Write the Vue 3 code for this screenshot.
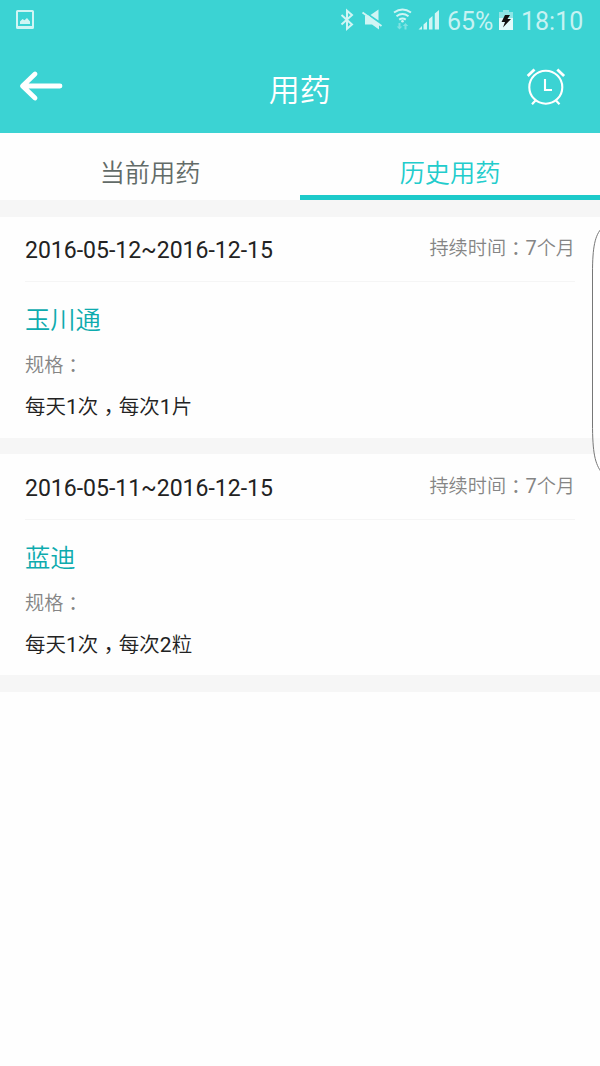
<script setup>
const tabs = [
  { label: '当前用药', active: false },
  { label: '历史用药', active: true },
]

const records = [
  { period: '2016-05-12~2016-12-15', months: 7, name: '玉川通', times: 1, amount: 1, unit: '片' },
  { period: '2016-05-11~2016-12-15', months: 7, name: '蓝迪', times: 1, amount: 2, unit: '粒' },
]
</script>

<template>
  <div class="screen">
    <header class="top">
      <div class="status">
        <svg class="picture" width="18" height="19" viewBox="0 0 18 19">
          <path fill-rule="evenodd" d="M1.500 0h15A1.500 1.500 0 0 1 18 1.500v16a1.500 1.500 0 0 1-1.500 1.500h-15A1.500 1.500 0 0 1 0 17.500v-16A1.500 1.500 0 0 1 1.500 0zM2 2v14h14V2z" />
          <path d="M4 14v-2.500l2.500-2.500 2 1.200L11 8l3 3.500V14z" />
        </svg>
        <div class="indicators">
          <svg width="160" height="40" viewBox="340 0 160 40" class="radio">
            <path d="M341.500 15l10.500 9.500-5 4.300V10.700l5 4.300-10.500 9.500" fill="none" stroke="currentColor" stroke-width="2" />
            <path d="M370.500 15L378.500 9.500V20.500zM365 15.500h3.500l10.500 9V29.500l-7-5h-7z" />
            <path d="M362.500 12.500l19 13.500" stroke="currentColor" stroke-width="2" />
            <g fill="none" stroke="currentColor" stroke-width="2">
              <path d="M394 12.500q8.500-6 17 0" />
              <path d="M396.500 16.200q6-4.500 12 0" />
              <path d="M399.200 19.600q3.300-2.400 6.600 0" />
            </g>
            <circle cx="402.500" cy="21.300" r="1.300" />
            <g opacity=".45">
              <path d="M398.500 23h2v3.500h1.800l-2.800 3-2.800-3h1.800zM404.500 29.500h2V26h1.800l-2.800-3-2.800 3h1.800z" />
            </g>
            <path d="M418.500 29.500l3.500-3.500v3.500zM423.500 24.500l3.500-3v8h-3.500zM429 19l3.500-3v13.500H429zM434.800 13.500l4.200-3.500v19.500h-4.200z" />
          </svg>
          <span class="percent">65%</span>
          <svg class="battery" width="14" height="20" viewBox="0 0 14 20">
            <path d="M4 0h6v2h4v6H0V2h4z" opacity=".5" />
            <path d="M0 8h14v12H0z" />
            <path d="M6 5h5L8.500 9H12l-8 8.500 2-5.500H2.500z" fill="#111" />
          </svg>
          <span class="clock">18:10</span>
        </div>
      </div>
      <nav class="bar">
        <svg class="back" width="44" height="32" viewBox="0 0 44 32">
          <path d="M16 4L3.500 16 16 28M4.500 16H41" fill="none" stroke="#fff" stroke-width="4.800" stroke-linecap="round" stroke-linejoin="round" />
        </svg>
        <h1>用药</h1>
        <svg class="alarm" width="40" height="40" viewBox="526 67 40 40" fill="none" stroke="#fff">
          <circle cx="545.800" cy="87.200" r="16.500" stroke-width="2.100" />
          <path d="M545 79v11h7" stroke-width="2.100" />
          <path d="M527.700 76l6.800-6.600M557.300 69.400l6.800 6.600" stroke-width="2.800" />
          <path d="M535.500 100.500l-3.500 3.700M556 100.500l3.500 3.700" stroke-width="2.200" />
        </svg>
      </nav>
    </header>

    <div class="tabs">
      <div v-for="t in tabs" :key="t.label" class="tab" :class="{ active: t.active }">{{ t.label }}</div>
    </div>

    <main>
      <section v-for="r in records" :key="r.period" class="card">
        <div class="head">
          <span class="period">{{ r.period }}</span>
          <span class="duration">持续时间<span class="colon">：</span><span class="count">{{ r.months }}</span>个月</span>
        </div>
        <h2>{{ r.name }}</h2>
        <p class="spec">规格<span class="colon">：</span></p>
        <p class="usage">每天<span class="digit">{{ r.times }}</span>次<span class="comma">，</span>每次<span class="digit">{{ r.amount }}</span>{{ r.unit }}</p>
      </section>
    </main>

    <svg class="edge" width="10" height="246" viewBox="0 0 10 246" fill="#fff" fill-opacity=".5" stroke="#777">
      <path d="M12 0C5 7 2.500 19 2.500 45V195C2.500 225 5 236 12 245" />
    </svg>
  </div>
</template>

<style>
body {
  background: #fefefe;
}
</style>

<style scoped>
.screen {
  position: relative;
  height: 1066px;
  overflow: hidden;
  background: #fefefe;
  font-family: Roboto, "Noto Sans CJK SC", sans-serif;
  color: #222;
}
.top {
  height: 133px;
  background: #3bd3d3;
}
.status {
  display: flex;
  justify-content: space-between;
  height: 40px;
  color: #d0f5f4;
  fill: currentColor;
}
.picture {
  margin: 10px 0 0 16px;
}
.indicators {
  display: flex;
  width: 260px;
  line-height: 43px;
  font-size: 25px;
}
.percent,
.clock {
  color: #c6f2f2;
}
.radio {
  flex: none;
  width: 160px;
  margin-right: -53px;
}
.percent {
  width: 52px;
}
.battery {
  flex: none;
  margin: 10px 8px 0 0;
  color: #e2fafa;
}
.bar {
  display: flex;
  justify-content: space-between;
  height: 93px;
  padding: 0 34px 0 19px;
}
.back {
  margin-top: 30px;
}
h1 {
  margin: 0 -10.500px 0 0;
  line-height: 102px;
  font-size: 31px;
  font-weight: 350;
  color: #fff;
}
.alarm {
  margin-top: 27px;
}
.tabs {
  display: flex;
  height: 67px;
}
.tab {
  flex: 1;
  box-sizing: border-box;
  line-height: 81px;
  text-align: center;
  font-size: 25.200px;
  font-weight: 350;
  color: #626b68;
}
.tab.active {
  border-bottom: 5px solid #1dcaca;
  color: #22cccc;
}
main {
  display: flex;
  flex-direction: column;
  gap: 16px;
  padding: 17px 0;
  background: #f6f6f6;
}
.card {
  box-sizing: border-box;
  height: 221px;
  padding: 0 25px;
  background: #fefefe;
}
.card + .card {
  padding-top: 1px;
}
.head {
  display: flex;
  justify-content: space-between;
  height: 64px;
  border-bottom: 1px solid #f5f5f5;
}
.period {
  font-size: 23px;
  line-height: 67px;
}
.duration {
  font-size: 19.200px;
  font-weight: 350;
  line-height: 60px;
  color: #858585;
}
.count {
  font-size: 20px;
  font-weight: 400;
}
.colon {
  position: relative;
  top: 1px;
  font-family: "Noto Sans CJK TC", sans-serif;
  font-weight: 400;
}
h2 {
  margin: 20px 0 0;
  line-height: 38px;
  font-size: 25.300px;
  font-weight: 350;
  color: #0dabae;
}
.spec {
  margin: 9px 0 0;
  line-height: 30px;
  font-size: 19.200px;
  font-weight: 350;
  color: #858585;
}
.usage {
  margin: 9px 0 0;
  line-height: 30px;
  font-size: 20.500px;
  font-weight: 350;
}
.digit {
  font-size: 21px;
  font-weight: 400;
}
.comma {
  position: relative;
  top: 6px;
  font-family: "Noto Sans CJK TC", sans-serif;
  font-weight: 400;
}
.edge {
  position: absolute;
  top: 228px;
  right: 0;
}
</style>
